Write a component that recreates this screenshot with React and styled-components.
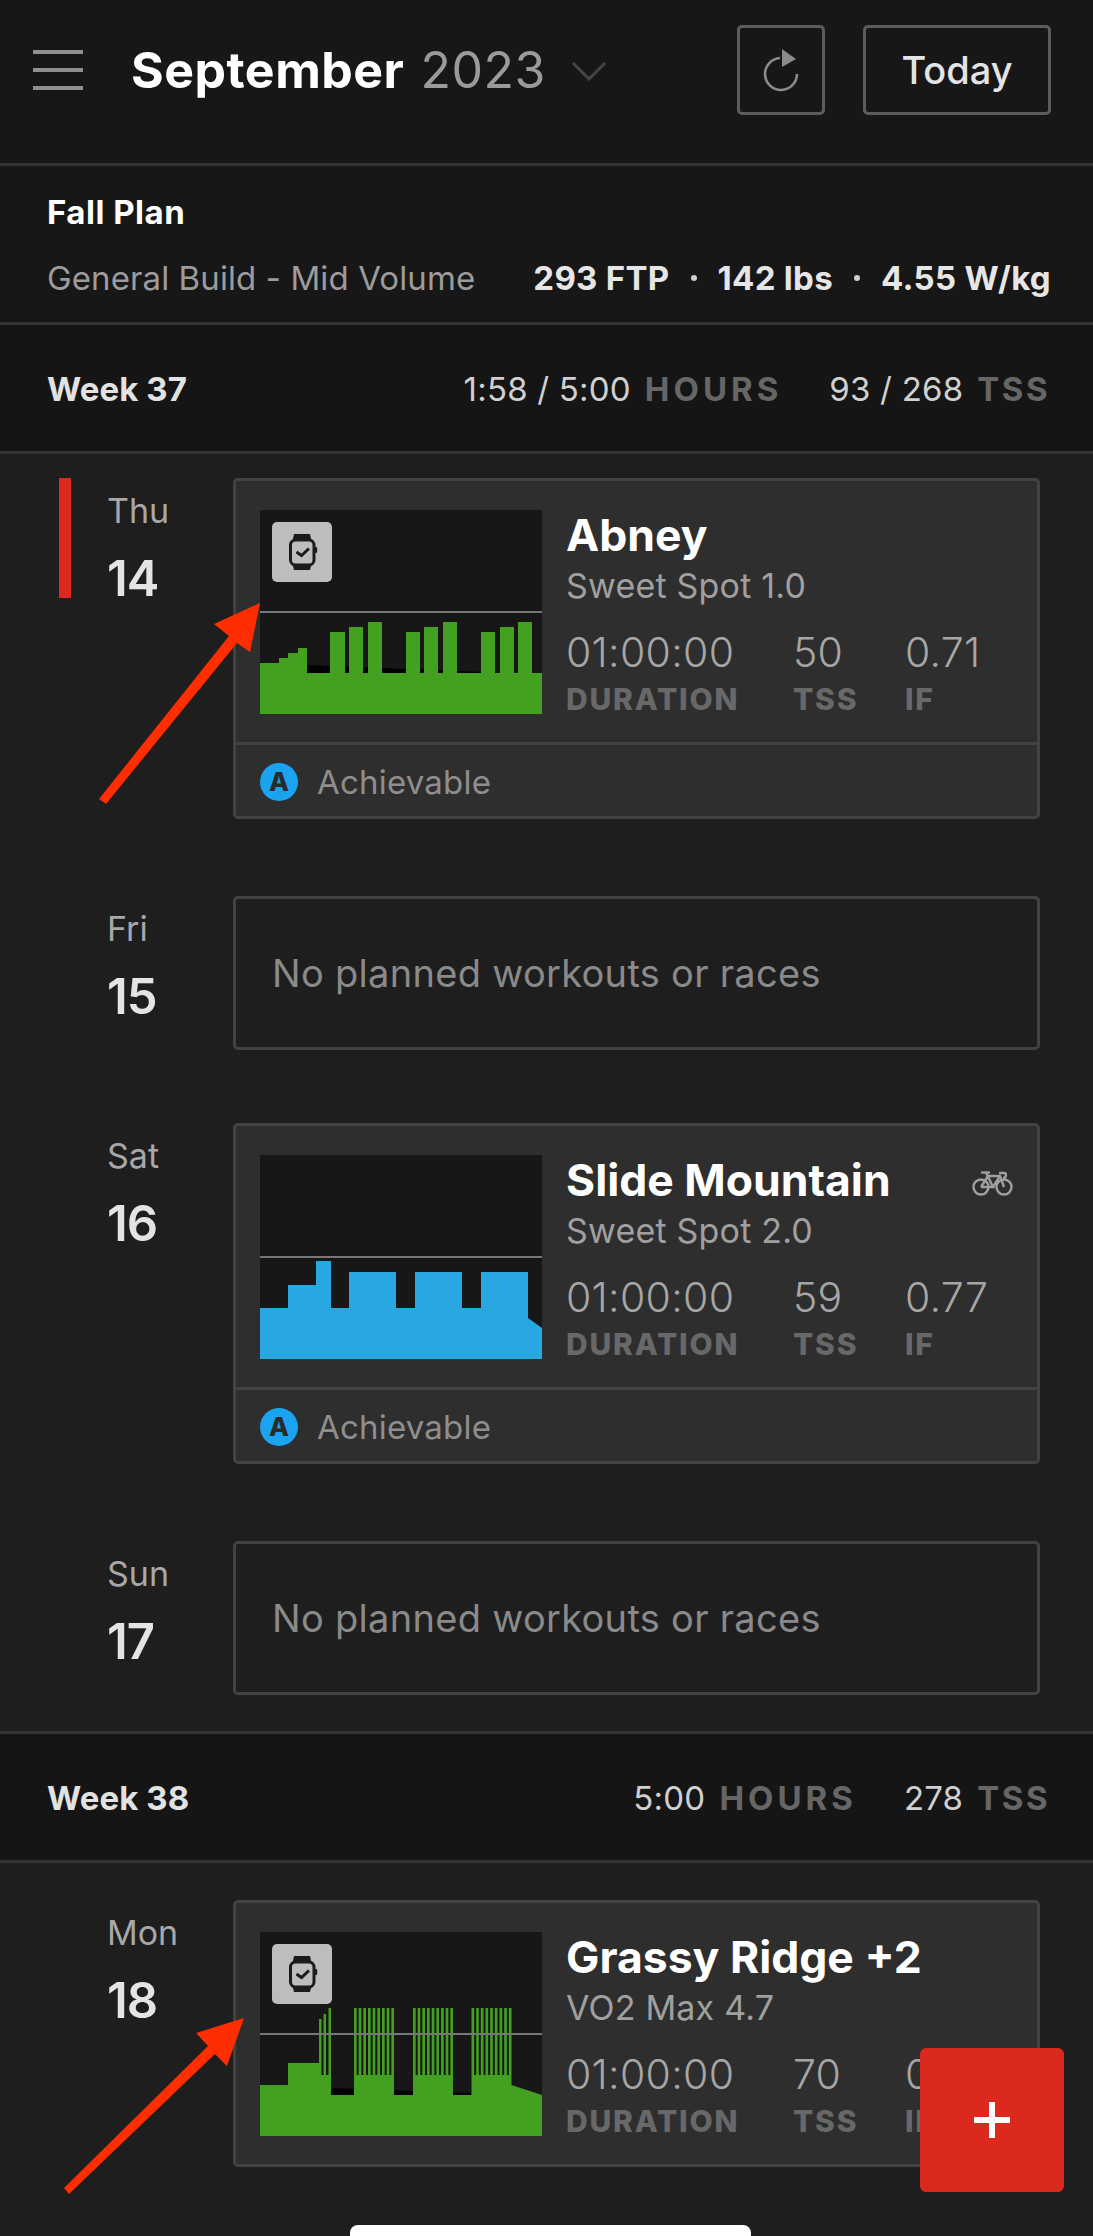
import React from 'react';
import styled, { createGlobalStyle } from 'styled-components';

const GlobalStyle = createGlobalStyle`
  html, body {
    margin: 0;
    padding: 0;
    background: #1e1e1e;
    overflow: hidden;
  }
  * {
    box-sizing: border-box;
  }
`;

const GREEN = '#43a021';
const BLUE = '#27a8e0';

const Page = styled.div`
  position: relative;
  width: 1093px;
  height: 2236px;
  overflow: hidden;
  background: #1e1e1e;
  color: #e6e6e6;
  font-family: 'Inter', 'Liberation Sans', sans-serif;
`;

const Header = styled.header`
  display: flex;
  align-items: center;
  height: 166px;
  padding: 0 42px 24px 33px;
  background: #171717;
  border-bottom: 3px solid #333;
`;

const Burger = styled.div`
  display: flex;
  flex-direction: column;
  justify-content: space-between;
  width: 50px;
  height: 40px;
  margin-right: 48px;
  span {
    display: block;
    height: 4px;
    background: #8f8f8f;
  }
`;

const MonthTitle = styled.h1`
  margin: 0;
  font-size: 50px;
  line-height: 60px;
  font-weight: 700;
  letter-spacing: 0.5px;
  color: #fff;
  white-space: nowrap;
  span {
    font-weight: 400;
    color: #9a9a9a;
    margin-left: 16px;
  }
`;

const Chevron = styled.svg`
  width: 36px;
  height: 20px;
  margin-left: 25px;
  margin-top: 3px;
`;

const HeaderActions = styled.div`
  display: flex;
  gap: 38px;
  margin-left: auto;
`;

const OutlineButton = styled.button`
  display: flex;
  align-items: center;
  justify-content: center;
  width: ${(p) => p.$width}px;
  height: 90px;
  padding: 0;
  background: transparent;
  border: 3px solid #5c5c5c;
  border-radius: 5px;
  color: #e4e4e4;
  font-family: inherit;
  font-size: 38px;
  font-weight: 500;
`;

const RefreshIcon = styled.svg`
  width: 44px;
  height: 50px;
  margin-top: 6px;
`;

const PlanBlock = styled.section`
  height: 159px;
  padding: 26px 42px 0 47px;
  background: #171717;
  border-bottom: 3px solid #333;
`;

const PlanName = styled.div`
  font-size: 33px;
  line-height: 40px;
  font-weight: 700;
  letter-spacing: 0.5px;
  color: #fff;
`;

const PlanRow = styled.div`
  display: flex;
  justify-content: space-between;
  align-items: baseline;
  margin-top: 26px;
  line-height: 40px;
`;

const PlanType = styled.span`
  font-size: 33px;
  letter-spacing: 0.1px;
  color: #9c9c9c;
`;

const PlanStats = styled.span`
  display: flex;
  gap: 21px;
  font-size: 33px;
  font-weight: 700;
  letter-spacing: 0.3px;
  color: #e6e6e6;
  white-space: nowrap;
`;

const StatDot = styled.i`
  align-self: center;
  width: 6px;
  height: 6px;
  border-radius: 50%;
  background: #cfcfcf;
`;

const WeekRow = styled.section`
  display: flex;
  align-items: center;
  justify-content: space-between;
  height: ${(p) => (p.$bordered ? 132 : 129)}px;
  padding: 2px 43px 0 47px;
  background: #151515;
  border-top: ${(p) => (p.$bordered ? '3px solid #333' : 'none')};
  border-bottom: 3px solid #333;
`;

const WeekName = styled.div`
  font-size: 33px;
  font-weight: 700;
  letter-spacing: 0.1px;
  color: #e2e2e2;
`;

const WeekStats = styled.div`
  display: flex;
  gap: 47px;
`;

const WeekStat = styled.span`
  font-size: 33px;
  letter-spacing: 0.2px;
  color: #d0d0d0;
  white-space: nowrap;
`;

const WeekUnit = styled.b`
  margin-left: 14px;
  font-weight: 700;
  color: #666;
  letter-spacing: ${(p) => p.$tracking}px;
`;

const DayList = styled.div`
  display: flex;
  flex-direction: column;
  padding: ${(p) => p.$top}px 0 ${(p) => p.$bottom}px;
`;

const DayRow = styled.div`
  display: flex;
  padding-left: 59px;
  margin-bottom: ${(p) => p.$gap || 0}px;
`;

const TodayMark = styled.div`
  flex: none;
  width: 12px;
  height: 120px;
  margin-right: 36px;
  background: ${(p) => (p.$active ? '#dc291e' : 'transparent')};
`;

const DayCol = styled.div`
  flex: none;
  width: 126px;
  padding-top: 14px;
`;

const DayName = styled.div`
  font-size: 34px;
  line-height: 38px;
  color: #a8a8a8;
`;

const DayNumber = styled.div`
  margin-top: 24px;
  font-size: 49px;
  line-height: 50px;
  font-weight: 600;
  letter-spacing: -1px;
  color: #e4e4e4;
`;

const Card = styled.article`
  width: 807px;
  background: #2e2e2e;
  border: 3px solid #424242;
  border-radius: 5px;
`;

const CardBody = styled.div`
  position: relative;
  display: flex;
  gap: 24px;
  padding: 29px 24px 28px;
`;

const ChartBox = styled.div`
  position: relative;
  flex: none;
  width: 282px;
  height: 204px;
  background: #171717;
  svg {
    display: block;
  }
`;

const DeviceBadge = styled.div`
  position: absolute;
  top: 12px;
  left: 12px;
  display: flex;
  width: 60px;
  height: 60px;
  background: #bdbdbd;
  border-radius: 5px;
`;

const CardInfo = styled.div`
  flex: 1;
  min-width: 0;
  height: 204px;
`;

const WorkoutTitle = styled.h2`
  margin: -1px 0 0;
  font-size: 44.5px;
  line-height: 52px;
  font-weight: 700;
  color: #fff;
`;

const WorkoutType = styled.div`
  margin-top: 5px;
  font-size: 34px;
  line-height: 40px;
  letter-spacing: 0.2px;
  color: #a0a0a0;
`;

const StatRow = styled.div`
  display: flex;
  margin-top: 24px;
`;

const Stat = styled.div`
  width: ${(p) => p.$width}px;
`;

const StatValue = styled.div`
  font-size: 41px;
  line-height: 44px;
  color: #a6a6a6;
  font-weight: 300;
  letter-spacing: 0.3px;
`;

const StatLabel = styled.div`
  margin-top: 7px;
  font-size: 30px;
  line-height: 36px;
  font-weight: 800;
  letter-spacing: 1.8px;
  color: #686868;
`;

const BikeIcon = styled.svg`
  position: absolute;
  top: 45px;
  right: 24px;
  width: 41px;
  height: 25px;
`;

const CardFooter = styled.footer`
  display: flex;
  align-items: center;
  gap: 19px;
  height: 74px;
  padding-left: 24px;
  padding-top: 2px;
  border-top: 3px solid #424242;
  font-size: 33px;
  letter-spacing: 0.2px;
  color: #8e8e8e;
`;

const LevelBadge = styled.span`
  display: flex;
  align-items: center;
  justify-content: center;
  width: 38px;
  height: 38px;
  border-radius: 50%;
  background: #1aa3ee;
  color: #2a2a2a;
  font-size: 26px;
  font-weight: 800;
`;

const EmptyCard = styled.div`
  display: flex;
  align-items: center;
  width: 807px;
  height: 154px;
  padding-left: 36px;
  border: 3px solid #424242;
  border-radius: 5px;
  font-size: 38px;
  letter-spacing: 0.3px;
  color: #8a8a8a;
`;

const AddButton = styled.button`
  position: absolute;
  left: 920px;
  top: 2048px;
  display: flex;
  align-items: center;
  justify-content: center;
  width: 144px;
  height: 144px;
  padding: 0;
  border: none;
  border-radius: 6px;
  background: #dc291e;
`;

const HomeBar = styled.div`
  position: absolute;
  left: 350px;
  top: 2225px;
  width: 401px;
  height: 20px;
  background: #fff;
  border-radius: 8px;
`;

const Annotation = styled.svg`
  position: absolute;
  left: 0;
  top: 0;
  pointer-events: none;
`;

const WatchIcon = () => (
  <svg width="60" height="60" viewBox="0 0 60 60">
    <path d="M20.5 19 L22 12 H38 L39.5 19 Z" fill="#1b1b1b" />
    <path d="M20.5 42 L22 48 H38 L39.5 42 Z" fill="#1b1b1b" />
    <rect x="18.5" y="18" width="23.5" height="25" rx="5" fill="none" stroke="#1b1b1b" strokeWidth="3" />
    <rect x="43" y="25" width="2.2" height="6" rx="1" fill="#1b1b1b" />
    <path d="M24.5 30 L29.5 33.5 L37 26.5" fill="none" stroke="#1b1b1b" strokeWidth="3" />
  </svg>
);

const Chart = ({ color, points, shade }) => (
  <svg width="282" height="204" viewBox="0 0 282 204">
    {shade && <polygon points={shade} fill="#000" />}
    <polygon points={points} fill={color} />
    <rect x="0" y="101" width="282" height="2" fill="#777" />
  </svg>
);

// bars as [x start, x end, top], everything else sits on the base level
const stepsToPoints = (start, bars, base, end) => {
  const pts = [`0,204`, ...start];
  bars.forEach(([a, b, top]) => {
    pts.push(`${a},${base}`, `${a},${top}`, `${b},${top}`, `${b},${base}`);
  });
  return [...pts, ...end, `282,204`].join(' ');
};

const intervalBars = (from) =>
  Array.from({ length: 9 }, (_, i) => [from + i * 4.67, from + i * 4.67 + 2.67, 76]);

const abneyPoints = stepsToPoints(
  ['0,153', '19,153', '19,148', '28,148', '28,143', '38,143', '38,138', '47,138', '47,163'],
  [
    [70, 85, 122],
    [89, 103, 117],
    [108, 122, 112],
    [146, 160, 122],
    [164, 178, 117],
    [183, 197, 112],
    [221, 235, 122],
    [240, 254, 117],
    [258, 272, 112],
  ],
  163,
  ['282,163']
);

const slidePoints =
  '0,204 0,153 28,153 28,130 56,130 56,106 71,106 71,153 89,153 89,117 136,117 136,153 155,153 155,117 202,117 202,153 221,153 221,117 268,117 268,163 282,173 282,204';

const grassyPoints = (() => {
  const pts = ['0,204', '0,153', '28,153', '28,131', '59,131', '59,87', '61.5,87', '61.5,143', '63.5,143', '63.5,82', '66,82', '66,143', '68.5,143', '68.5,76', '71,76', '71,163'];
  [94, 153, 211.5].forEach((from) => {
    intervalBars(from).forEach(([a, b, top], i) => {
      pts.push(`${a},${i === 0 ? 163 : 143}`, `${a},${top}`, `${b},${top}`, `${b},143`);
    });
    pts.push(`${from + 40},143`);
    if (from < 200) pts.push(`${from + 40},163`);
  });
  pts.push('251.5,153', '282,163', '282,204');
  return pts.join(' ');
})();

const Day = ({ name, num, active, gap, children }) => (
  <DayRow $gap={gap}>
    <TodayMark $active={active} />
    <DayCol>
      <DayName>{name}</DayName>
      <DayNumber>{num}</DayNumber>
    </DayCol>
    {children}
  </DayRow>
);

const Workout = ({ title, type, tss, intensity, watch, bike, level, chart }) => (
  <Card>
    <CardBody>
      <ChartBox>
        {chart}
        {watch && (
          <DeviceBadge>
            <WatchIcon />
          </DeviceBadge>
        )}
      </ChartBox>
      <CardInfo>
        <WorkoutTitle>{title}</WorkoutTitle>
        <WorkoutType>{type}</WorkoutType>
        <StatRow>
          <Stat $width={227}>
            <StatValue>01:00:00</StatValue>
            <StatLabel>DURATION</StatLabel>
          </Stat>
          <Stat $width={112}>
            <StatValue>{tss}</StatValue>
            <StatLabel>TSS</StatLabel>
          </Stat>
          <Stat $width={100}>
            <StatValue>{intensity}</StatValue>
            <StatLabel>IF</StatLabel>
          </Stat>
        </StatRow>
      </CardInfo>
      {bike && (
        <BikeIcon viewBox="0 0 41 25" fill="none" stroke="#a0a0a0" strokeWidth="2.4">
          <circle cx="9" cy="16" r="7.5" />
          <circle cx="32" cy="16" r="7.5" />
          <path d="M9 16 L16 5 H28 L32 16" />
          <path d="M14 1.5 L21 16 H9" />
          <path d="M28 5 L21 16" />
          <path d="M9 1.5 H18" />
          <path d="M27 2 H32 Q34 2 34 4 Q34 7 31 7" />
        </BikeIcon>
      )}
    </CardBody>
    {level && (
      <CardFooter>
        <LevelBadge>A</LevelBadge>
        {level}
      </CardFooter>
    )}
  </Card>
);

export default function App() {
  return (
    <Page>
      <GlobalStyle />
      <Header>
        <Burger>
          <span />
          <span />
          <span />
        </Burger>
        <MonthTitle>
          September<span>2023</span>
        </MonthTitle>
        <Chevron viewBox="0 0 36 20" fill="none" stroke="#454545" strokeWidth="3">
          <path d="M2 2 L18 18 L34 2" />
        </Chevron>
        <HeaderActions>
          <OutlineButton $width={88}>
            <RefreshIcon viewBox="0 0 44 50" fill="none">
              <path d="M21 10 A16 16 0 1 0 38 26" stroke="#8b8b8b" strokeWidth="2.6" />
              <path d="M23 1 L37 11 L23 19 Z" fill="#8b8b8b" />
            </RefreshIcon>
          </OutlineButton>
          <OutlineButton $width={188}>Today</OutlineButton>
        </HeaderActions>
      </Header>

      <PlanBlock>
        <PlanName>Fall Plan</PlanName>
        <PlanRow>
          <PlanType>General Build - Mid Volume</PlanType>
          <PlanStats>
            <span>293 FTP</span>
            <StatDot />
            <span>142 lbs</span>
            <StatDot />
            <span>4.55 W/kg</span>
          </PlanStats>
        </PlanRow>
      </PlanBlock>

      <WeekRow>
        <WeekName>Week 37</WeekName>
        <WeekStats>
          <WeekStat>
            1:58 / 5:00<WeekUnit $tracking={4}>HOURS</WeekUnit>
          </WeekStat>
          <WeekStat>
            93 / 268<WeekUnit $tracking={2.5}>TSS</WeekUnit>
          </WeekStat>
        </WeekStats>
      </WeekRow>

      <DayList $top={24} $bottom={36}>
        <Day name="Thu" num="14" active gap={77}>
          <Workout
            title="Abney"
            type="Sweet Spot 1.0"
            tss="50"
            intensity="0.71"
            watch
            level="Achievable"
            chart={<Chart color={GREEN} points={abneyPoints} shade="47,155 222,162 222,163 47,163" />}
          />
        </Day>
        <Day name="Fri" num="15" gap={73}>
          <EmptyCard>No planned workouts or races</EmptyCard>
        </Day>
        <Day name="Sat" num="16" gap={77}>
          <Workout
            title="Slide Mountain"
            type="Sweet Spot 2.0"
            tss="59"
            intensity="0.77"
            bike
            level="Achievable"
            chart={<Chart color={BLUE} points={slidePoints} />}
          />
        </Day>
        <Day name="Sun" num="17">
          <EmptyCard>No planned workouts or races</EmptyCard>
        </Day>
      </DayList>

      <WeekRow $bordered>
        <WeekName>Week 38</WeekName>
        <WeekStats>
          <WeekStat>
            5:00<WeekUnit $tracking={4}>HOURS</WeekUnit>
          </WeekStat>
          <WeekStat>
            278<WeekUnit $tracking={2.5}>TSS</WeekUnit>
          </WeekStat>
        </WeekStats>
      </WeekRow>

      <DayList $top={37} $bottom={0}>
        <Day name="Mon" num="18">
          <Workout
            title="Grassy Ridge +2"
            type="VO2 Max 4.7"
            tss="70"
            intensity="0.84"
            watch
            chart={<Chart color={GREEN} points={grassyPoints} shade="71,156 211,161 211,163 71,163" />}
          />
        </Day>
      </DayList>

      <Annotation width="1093" height="2236" viewBox="0 0 1093 2236">
        <polygon points="260,603 214,624 229,636 99,799 106,804 237,643 250,652" fill="#ff2d00" />
        <polygon points="244,2018 196,2033 208,2046 64,2188 69,2194 215,2054 227,2066" fill="#ff2d00" />
      </Annotation>

      <AddButton aria-label="Add">
        <svg width="36" height="36" viewBox="0 0 36 36">
          <rect x="15" y="0" width="6" height="36" fill="#fff" />
          <rect x="0" y="15" width="36" height="6" fill="#fff" />
        </svg>
      </AddButton>
      <HomeBar />
    </Page>
  );
}
